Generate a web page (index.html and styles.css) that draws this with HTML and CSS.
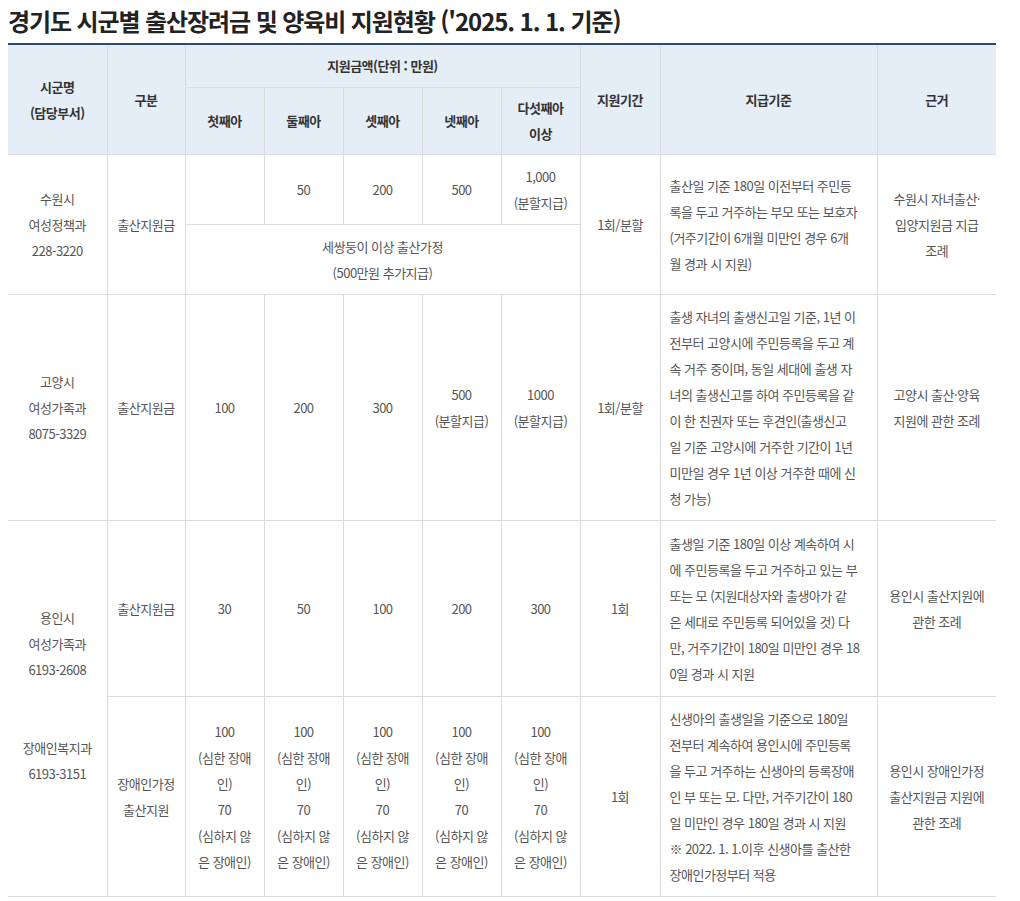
FILE: index.html
```html
<!DOCTYPE html>
<html lang="ko">
<head>
<meta charset="utf-8">
<title>경기도 시군별 출산장려금 및 양육비 지원현황</title>
<link rel="stylesheet" href="styles.css">
</head>
<body>
<div class="page">
  <h1 class="title">경기도 시군별 출산장려금 및 양육비 지원현황 ('2025. 1. 1. 기준)</h1>
  <table class="grid">
    <colgroup>
      <col class="c-city"><col class="c-kind">
      <col class="c-amt"><col class="c-amt"><col class="c-amt"><col class="c-amt"><col class="c-amt">
      <col class="c-period"><col class="c-rule"><col class="c-law">
    </colgroup>
    <thead>
      <tr>
        <th rowspan="2" class="first">시군명<br>(담당부서)</th>
        <th rowspan="2">구분</th>
        <th colspan="5">지원금액(단위 : 만원)</th>
        <th rowspan="2">지원기간</th>
        <th rowspan="2">지급기준</th>
        <th rowspan="2" class="last">근거</th>
      </tr>
      <tr class="sub">
        <th>첫째아</th>
        <th>둘째아</th>
        <th>셋째아</th>
        <th>넷째아</th>
        <th>다섯째아<br>이상</th>
      </tr>
    </thead>
    <tbody>
      <tr>
        <td rowspan="2" class="first">수원시<br>여성정책과<br>228-3220</td>
        <td rowspan="2">출산지원금</td>
        <td></td>
        <td>50</td>
        <td>200</td>
        <td>500</td>
        <td>1,000<br>(분할지급)</td>
        <td rowspan="2">1회/분할</td>
        <td rowspan="2" class="rule">출산일 기준 180일 이전부터 주민등<br>록을 두고 거주하는 부모 또는 보호자<br>(거주기간이 6개월 미만인 경우 6개<br>월 경과 시 지원)</td>
        <td rowspan="2" class="last">수원시 자녀출산·<br>입양지원금 지급<br>조례</td>
      </tr>
      <tr>
        <td colspan="5">세쌍둥이 이상 출산가정<br>(500만원 추가지급)</td>
      </tr>
      <tr>
        <td class="first">고양시<br>여성가족과<br>8075-3329</td>
        <td>출산지원금</td>
        <td>100</td>
        <td>200</td>
        <td>300</td>
        <td>500<br>(분할지급)</td>
        <td>1000<br>(분할지급)</td>
        <td>1회/분할</td>
        <td class="rule">출생 자녀의 출생신고일 기준, 1년 이<br>전부터 고양시에 주민등록을 두고 계<br>속 거주 중이며, 동일 세대에 출생 자<br>녀의 출생신고를 하여 주민등록을 같<br>이 한 친권자 또는 후견인(출생신고<br>일 기준 고양시에 거주한 기간이 1년<br>미만일 경우 1년 이상 거주한 때에 신<br>청 가능)</td>
        <td class="last">고양시 출산·양육<br>지원에 관한 조례</td>
      </tr>
      <tr class="tall">
        <td rowspan="2" class="first">용인시<br>여성가족과<br>6193-2608<br><br><br>장애인복지과<br>6193-3151<br><br></td>
        <td>출산지원금</td>
        <td>30</td>
        <td>50</td>
        <td>100</td>
        <td>200</td>
        <td>300</td>
        <td>1회</td>
        <td class="rule">출생일 기준 180일 이상 계속하여 시<br>에 주민등록을 두고 거주하고 있는 부<br>또는 모 (지원대상자와 출생아가 같<br>은 세대로 주민등록 되어있을 것) 다<br>만, 거주기간이 180일 미만인 경우 18<br>0일 경과 시 지원</td>
        <td class="last">용인시 출산지원에<br>관한 조례</td>
      </tr>
      <tr>
        <td>장애인가정<br>출산지원</td>
        <td>100<br>(심한 장애<br>인)<br>70<br>(심하지 않<br>은 장애인)</td>
        <td>100<br>(심한 장애<br>인)<br>70<br>(심하지 않<br>은 장애인)</td>
        <td>100<br>(심한 장애<br>인)<br>70<br>(심하지 않<br>은 장애인)</td>
        <td>100<br>(심한 장애<br>인)<br>70<br>(심하지 않<br>은 장애인)</td>
        <td>100<br>(심한 장애<br>인)<br>70<br>(심하지 않<br>은 장애인)</td>
        <td>1회</td>
        <td class="rule">신생아의 출생일을 기준으로 180일<br>전부터 계속하여 용인시에 주민등록<br>을 두고 거주하는 신생아의 등록장애<br>인 부 또는 모. 다만, 거주기간이 180<br>일 미만인 경우 180일 경과 시 지원<br>※ 2022. 1. 1.이후 신생아를 출산한<br>장애인가정부터 적용</td>
        <td class="last">용인시 장애인가정<br>출산지원금 지원에<br>관한 조례</td>
      </tr>
    </tbody>
  </table>
</div>
</body>
</html>
```

FILE: styles.css
```css
html, body {
  margin: 0;
  padding: 0;
  background: #ffffff;
}

body {
  font-family: "Noto Sans CJK KR", "Noto Sans", "Liberation Sans", sans-serif;
  color: #555555;
}

.page {
  padding: 6px 24px 0 8px;
}

.title {
  margin: 0 0 7px;
  font-size: 24px;
  line-height: 30px;
  font-weight: 700;
  letter-spacing: -1.1px;
  color: #222222;
}

.grid {
  width: 988px;
  table-layout: fixed;
  border-collapse: collapse;
  border-top: 2px solid #2b4a6e;
  font-size: 13px;
  line-height: 26px;
  letter-spacing: -0.5px;
}

.c-city { width: 99px; }
.c-kind { width: 78px; }
.c-amt { width: 79px; }
.c-period { width: 80px; }
.c-rule { width: 217px; }
.c-law { width: 119px; }

.grid th,
.grid td {
  border: 1px solid #dcdcdc;
  text-align: center;
  vertical-align: middle;
  white-space: nowrap;
}

.grid th {
  padding: 8px 4px;
  background: #e5edf7;
  color: #333333;
  font-weight: 700;
}

.grid .sub th {
  padding: 7px 4px;
}

.grid td {
  padding: 8.5px 4px;
}

.grid .tall td {
  padding-top: 9.5px;
  padding-bottom: 9.5px;
}

.grid .first {
  border-left: none;
}

.grid .last {
  border-right: none;
}

.grid td.rule {
  text-align: left;
  padding-left: 9px;
  padding-right: 6px;
}
```
